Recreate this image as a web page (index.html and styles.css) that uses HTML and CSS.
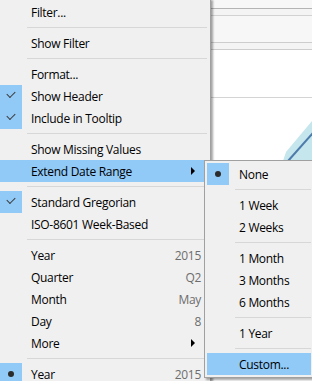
FILE: index.html
```html
<!DOCTYPE html>
<html lang="en">
<head>
    <meta charset="UTF-8">
    <meta name="viewport" content="width=device-width, initial-scale=1.0">
    <title>Date field menu</title>
    <link rel="stylesheet" href="styles.css">
</head>
<body>
    <!-- Chart behind the menus -->
    <div class="chart">
        <div class="strip strip-a"></div>
        <div class="strip strip-b"></div>
        <div class="strip strip-c"></div>
        <div class="strip strip-d"></div>
        <div class="plot-top"></div>
        <svg class="trend" width="312" height="283" viewBox="0 0 312 283">
            <polygon points="283,63 286,54 312,23 312,63" fill="#c4e6ec"/>
            <line x1="288" y1="63" x2="313" y2="35" stroke="#4d7bab" stroke-width="2"/>
        </svg>
    </div>

    <!-- Main context menu -->
    <div class="menu main-menu">
        <div class="item"><span class="mark"></span><span class="label">Filter...</span></div>
        <div class="sep"></div>
        <div class="item"><span class="mark"></span><span class="label">Show Filter</span></div>
        <div class="sep"></div>
        <div class="item"><span class="mark"></span><span class="label">Format...</span></div>
        <div class="item"><span class="mark on check"></span><span class="label">Show Header</span></div>
        <div class="item"><span class="mark on check"></span><span class="label">Include in Tooltip</span></div>
        <div class="sep"></div>
        <div class="item"><span class="mark"></span><span class="label">Show Missing Values</span></div>
        <div class="item active"><span class="mark"></span><span class="label">Extend Date Range</span><span class="arrow"></span></div>
        <div class="sep"></div>
        <div class="item"><span class="mark on check"></span><span class="label">Standard Gregorian</span></div>
        <div class="item"><span class="mark"></span><span class="label">ISO-8601 Week-Based</span></div>
        <div class="sep"></div>
        <div class="item"><span class="mark"></span><span class="label">Year</span><span class="value">2015</span></div>
        <div class="item"><span class="mark"></span><span class="label">Quarter</span><span class="value">Q2</span></div>
        <div class="item"><span class="mark"></span><span class="label">Month</span><span class="value">May</span></div>
        <div class="item"><span class="mark"></span><span class="label">Day</span><span class="value">8</span></div>
        <div class="item"><span class="mark"></span><span class="label">More</span><span class="arrow"></span></div>
        <div class="sep"></div>
        <div class="item"><span class="mark on dot"></span><span class="label">Year</span><span class="value">2015</span></div>
    </div>

    <!-- Extend Date Range submenu -->
    <div class="menu sub-menu">
        <div class="item"><span class="mark on dot"></span><span class="label">None</span></div>
        <div class="sep"></div>
        <div class="item"><span class="mark"></span><span class="label">1 Week</span></div>
        <div class="item"><span class="mark"></span><span class="label">2 Weeks</span></div>
        <div class="sep"></div>
        <div class="item"><span class="mark"></span><span class="label">1 Month</span></div>
        <div class="item"><span class="mark"></span><span class="label">3 Months</span></div>
        <div class="item"><span class="mark"></span><span class="label">6 Months</span></div>
        <div class="sep"></div>
        <div class="item"><span class="mark"></span><span class="label">1 Year</span></div>
        <div class="sep"></div>
        <div class="item active"><span class="mark"></span><span class="label">Custom...</span></div>
    </div>
</body>
</html>
```

FILE: styles.css
```css
* {
    margin: 0;
    padding: 0;
    box-sizing: border-box;
}

body {
    width: 312px;
    height: 381px;
    overflow: hidden;
    position: relative;
    background: #ffffff;
    font-family: "Open Sans", "Noto Sans", sans-serif;
    font-size: 12px;
    letter-spacing: -0.3px;
    color: #000;
}

/* Chart area behind */
.chart {
    width: 312px;
    height: 381px;
    background: #fff;
}

.strip {
    background: #f7f7f7;
}

.strip-a {
    height: 9px;
    border-bottom: 1px solid #b4b4b4;
}

.strip-b {
    height: 7px;
    background: #f4f4f4;
    border-bottom: 1px solid #d2d2d2;
}

.strip-c {
    height: 27px;
    border-bottom: 1px solid #cdcdcd;
}

.strip-d {
    height: 7px;
    background: #f4f4f4;
    border-bottom: 1px solid #cdcdcd;
}

.plot-top {
    height: 48px;
    border-bottom: 1px solid #d4d4d4;
}

.trend {
    display: block;
}

/* Menus */
.menu {
    position: absolute;
    background: #f0f0f0;
    border: 1px solid #a0a0a0;
    padding: 2px;
    box-shadow: 2px 2px 2px rgba(0, 0, 0, 0.35);
}

.main-menu {
    left: -3px;
    top: -2px;
    width: 214px;
}

.sub-menu {
    left: 204px;
    top: 160px;
    width: 110px;
}

.item {
    height: 22px;
    display: flex;
    align-items: center;
    position: relative;
    white-space: nowrap;
}

.item.active {
    background: #91c9f7;
}

.mark {
    width: 22px;
    height: 22px;
    flex: none;
    position: relative;
}

.mark.on {
    background: #91c9f7;
}

.mark.check::after {
    content: "";
    position: absolute;
    left: 7px;
    top: 6px;
    width: 7px;
    height: 4px;
    border-left: 1.3px solid #3a3a3a;
    border-bottom: 1.3px solid #3a3a3a;
    transform: rotate(-45deg);
}

.mark.dot::after {
    content: "";
    position: absolute;
    left: 8px;
    top: 8px;
    width: 6px;
    height: 6px;
    border-radius: 50%;
    background: #2b2b2b;
}

.label {
    margin-left: 9px;
    flex: 1;
    padding-top: 1px;
}

.sub-menu .label {
    margin-left: 10px;
}

.value {
    color: #6d6d6d;
    margin-right: 7px;
    padding-top: 1px;
}

.arrow {
    position: absolute;
    right: 13px;
    top: 7px;
    width: 0;
    height: 0;
    border-top: 4px solid transparent;
    border-bottom: 4px solid transparent;
    border-left: 4px solid #000;
}

.sep {
    height: 9px;
    padding-top: 4px;
    margin-left: 27px;
    margin-right: 1px;
}

.sep::before {
    content: "";
    display: block;
    height: 1px;
    background: #d7d7d7;
}

.sub-menu .sep {
    margin-left: 28px;
    margin-right: 0;
}
```
